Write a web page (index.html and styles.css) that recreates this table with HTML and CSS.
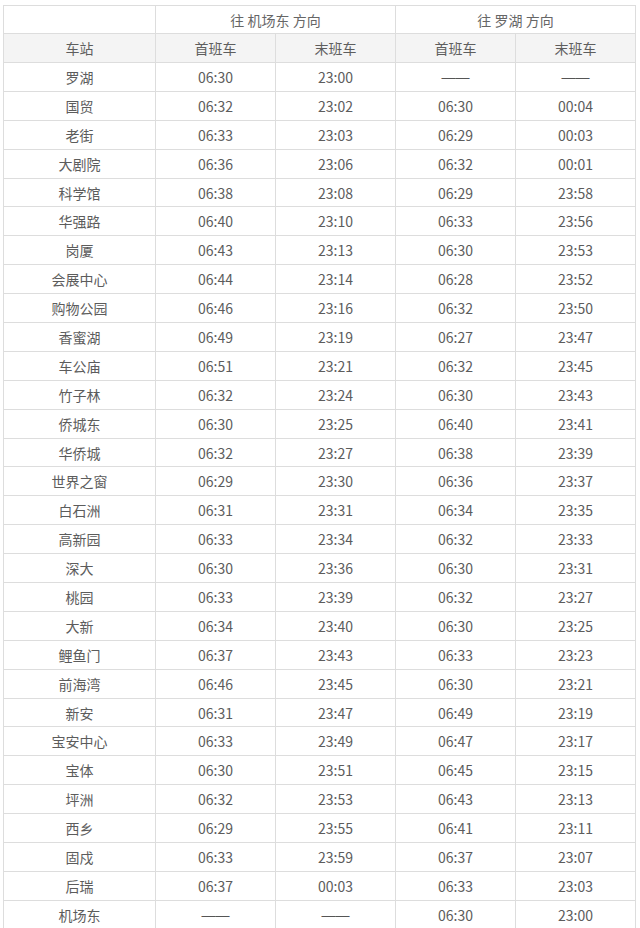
FILE: index.html
```html
<!DOCTYPE html>
<html lang="zh">
<head>
<meta charset="utf-8">
<link rel="stylesheet" href="styles.css">
</head>
<body>
<table class="tt">
<colgroup><col class="c-st"><col class="c-t"><col class="c-t"><col class="c-t"><col class="c-t"></colgroup>
<thead>
<tr class="dir"><th></th><th colspan="2">往 机场东 方向</th><th colspan="2">往 罗湖 方向</th></tr>
<tr class="sub"><th>车站</th><th>首班车</th><th>末班车</th><th>首班车</th><th>末班车</th></tr>
</thead>
<tbody>
<tr><td>罗湖</td><td>06:30</td><td>23:00</td><td><span class="dash">——</span></td><td><span class="dash">——</span></td></tr>
<tr><td>国贸</td><td>06:32</td><td>23:02</td><td>06:30</td><td>00:04</td></tr>
<tr><td>老街</td><td>06:33</td><td>23:03</td><td>06:29</td><td>00:03</td></tr>
<tr><td>大剧院</td><td>06:36</td><td>23:06</td><td>06:32</td><td>00:01</td></tr>
<tr><td>科学馆</td><td>06:38</td><td>23:08</td><td>06:29</td><td>23:58</td></tr>
<tr><td>华强路</td><td>06:40</td><td>23:10</td><td>06:33</td><td>23:56</td></tr>
<tr><td>岗厦</td><td>06:43</td><td>23:13</td><td>06:30</td><td>23:53</td></tr>
<tr><td>会展中心</td><td>06:44</td><td>23:14</td><td>06:28</td><td>23:52</td></tr>
<tr><td>购物公园</td><td>06:46</td><td>23:16</td><td>06:32</td><td>23:50</td></tr>
<tr><td>香蜜湖</td><td>06:49</td><td>23:19</td><td>06:27</td><td>23:47</td></tr>
<tr><td>车公庙</td><td>06:51</td><td>23:21</td><td>06:32</td><td>23:45</td></tr>
<tr><td>竹子林</td><td>06:32</td><td>23:24</td><td>06:30</td><td>23:43</td></tr>
<tr><td>侨城东</td><td>06:30</td><td>23:25</td><td>06:40</td><td>23:41</td></tr>
<tr><td>华侨城</td><td>06:32</td><td>23:27</td><td>06:38</td><td>23:39</td></tr>
<tr><td>世界之窗</td><td>06:29</td><td>23:30</td><td>06:36</td><td>23:37</td></tr>
<tr><td>白石洲</td><td>06:31</td><td>23:31</td><td>06:34</td><td>23:35</td></tr>
<tr><td>高新园</td><td>06:33</td><td>23:34</td><td>06:32</td><td>23:33</td></tr>
<tr><td>深大</td><td>06:30</td><td>23:36</td><td>06:30</td><td>23:31</td></tr>
<tr><td>桃园</td><td>06:33</td><td>23:39</td><td>06:32</td><td>23:27</td></tr>
<tr><td>大新</td><td>06:34</td><td>23:40</td><td>06:30</td><td>23:25</td></tr>
<tr><td>鲤鱼门</td><td>06:37</td><td>23:43</td><td>06:33</td><td>23:23</td></tr>
<tr><td>前海湾</td><td>06:46</td><td>23:45</td><td>06:30</td><td>23:21</td></tr>
<tr><td>新安</td><td>06:31</td><td>23:47</td><td>06:49</td><td>23:19</td></tr>
<tr><td>宝安中心</td><td>06:33</td><td>23:49</td><td>06:47</td><td>23:17</td></tr>
<tr><td>宝体</td><td>06:30</td><td>23:51</td><td>06:45</td><td>23:15</td></tr>
<tr><td>坪洲</td><td>06:32</td><td>23:53</td><td>06:43</td><td>23:13</td></tr>
<tr><td>西乡</td><td>06:29</td><td>23:55</td><td>06:41</td><td>23:11</td></tr>
<tr><td>固戍</td><td>06:33</td><td>23:59</td><td>06:37</td><td>23:07</td></tr>
<tr><td>后瑞</td><td>06:37</td><td>00:03</td><td>06:33</td><td>23:03</td></tr>
<tr><td>机场东</td><td><span class="dash">——</span></td><td><span class="dash">——</span></td><td>06:30</td><td>23:00</td></tr>
</tbody>
</table>
</body>
</html>
```
FILE: styles.css
```css
html, body {
  margin: 0;
  background: #ffffff;
}
body {
  padding: 5px 6px 0 3px;
  font-family: "Noto Sans CJK SC", "Noto Sans", sans-serif;
  font-size: 14px;
  color: #5c5c5c;
}
.tt {
  width: 632px;
  border-collapse: collapse;
  table-layout: fixed;
}
.c-st { width: 152px; }
.c-t { width: 120px; }
.tt th, .tt td {
  border: 1px solid #dddddd;
  text-align: center;
  padding: 0;
  font-weight: normal;
  line-height: 16px;
}
.dir th {
  height: 27px;
  color: #666666;
  background: #ffffff;
}
.sub th {
  height: 28px;
  background: #f4f4f4;
  color: #5e5e5e;
}
.tt td {
  height: 27.9px;
}
.dash {
  font-family: "Liberation Sans", sans-serif;
  color: #555555;
}
```
